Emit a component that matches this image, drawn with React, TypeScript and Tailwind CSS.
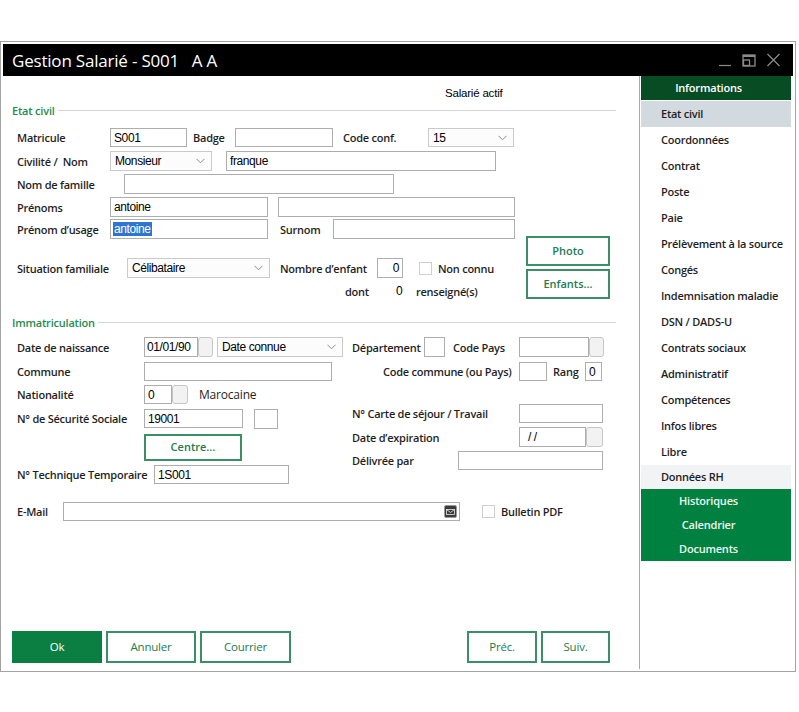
import React from 'react';

const LBL = "shrink-0 text-[11px] tracking-[-0.25px] font-semibold text-[#1f1f1f] whitespace-pre leading-none";
const FIELD_FONT = "font-['Liberation_Sans',sans-serif] text-[12px] tracking-[-0.4px] text-black";

function Box({ className = '', children }: { className?: string; children?: React.ReactNode }) {
  return (
    <div className={`shrink-0 h-full border border-[#adadad] bg-white flex items-center px-[3px] overflow-hidden whitespace-nowrap ${FIELD_FONT} ${className}`}>
      {children}
    </div>
  );
}

function Chevron() {
  return (
    <svg width="9" height="6" viewBox="0 0 9 6" className="shrink-0">
      <path d="M0.5 0.8 L4.5 4.8 L8.5 0.8" fill="none" stroke="#8a8a8a" strokeWidth="1" />
    </svg>
  );
}

function Select({ className = '', value }: { className?: string; value: string }) {
  return (
    <div className={`shrink-0 h-full border border-[#cacaca] bg-[#fcfcfc] flex items-center justify-between pl-[4px] pr-[6px] ${FIELD_FONT} ${className}`}>
      <span>{value}</span>
      <Chevron />
    </div>
  );
}

function SmallBtn({ className = '' }: { className?: string }) {
  return <div className={`shrink-0 h-full border border-[#c6c6c6] rounded-[3px] bg-[#f2f2f2] ${className}`} />;
}

function Check({ className = '' }: { className?: string }) {
  return <div className={`shrink-0 w-[13px] h-[13px] border border-[#cfcfcf] bg-white ${className}`} />;
}

function GreenBtn({ className = '', children }: { className?: string; children: React.ReactNode }) {
  return (
    <div className={`shrink-0 border-2 border-[#3b8f66] bg-white flex items-center justify-center text-[11px] font-semibold text-[#237c4f] ${className}`}>
      {children}
    </div>
  );
}

function Section({ title, pad }: { title: string; pad: string }) {
  return (
    <div className={`flex items-center h-[14px] pl-[9px] pr-[23px] ${pad}`}>
      <span className="text-[11px] tracking-[-0.2px] font-semibold text-[#1f8c50] leading-none">{title}</span>
      <div className="flex-1 ml-[3px] h-px bg-[#d4d4d4]" />
    </div>
  );
}

const sideItems = [
  'Coordonnées', 'Contrat', 'Poste', 'Paie', 'Prélèvement à la source', 'Congés',
  'Indemnisation maladie', 'DSN / DADS-U', 'Contrats sociaux', 'Administratif',
  'Compétences', 'Infos libres', 'Libre',
];

const SIDE = "ml-[1px] w-[150px] pl-[20px] flex items-center text-[11px] tracking-[-0.25px] font-semibold text-[#1f1f1f] whitespace-nowrap";

export default function App() {
  return (
    <div className="w-[799px] h-[712px] bg-white overflow-hidden font-['Open_Sans',sans-serif]">
      <div className="mt-[41px] w-[796px] h-[631px] border border-[#a3a3a3] p-[2px] flex flex-col">
        {/* title bar */}
        <div className="h-[32px] bg-black flex items-center pl-[9px] pr-[12px]">
          <span className="text-white text-[17px] leading-none whitespace-pre tracking-[-0.2px]">Gestion Salarié - S001   A A</span>
          <div className="ml-auto flex items-center gap-[10px]">
            <svg width="14" height="14" viewBox="0 0 14 14">
              <path d="M1 12.5 H13" stroke="#8c8c8c" strokeWidth="1.2" />
            </svg>
            <svg width="14" height="13" viewBox="0 0 14 13">
              <rect x="1" y="1" width="12" height="11" fill="none" stroke="#8c8c8c" strokeWidth="1.3" />
              <path d="M1 2 H13" stroke="#8c8c8c" strokeWidth="2" />
              <rect x="1.5" y="6" width="6" height="5.5" fill="none" stroke="#8c8c8c" strokeWidth="1.3" />
            </svg>
            <svg width="15" height="14" viewBox="0 0 15 14">
              <path d="M1.5 1 L13.5 13 M13.5 1 L1.5 13" stroke="#8c8c8c" strokeWidth="1.2" />
            </svg>
          </div>
        </div>

        {/* body */}
        <div className="flex-1 flex">
          <div className="w-[637px] border-r border-[#a9a9a9] flex flex-col">
            <div className="mt-[10px] h-[16px] pl-[442px] flex items-center font-['Liberation_Sans',sans-serif] text-[11.5px] tracking-[-0.2px] text-black">
              Salarié actif
            </div>
            <Section title="Etat civil" pad="mt-[1px]" />

            <div className="mt-[11px] h-[19px] pl-[14px] flex items-center">
              <span className={`${LBL} w-[93px]`}>Matricule</span>
              <Box className="w-[77px]">S001</Box>
              <span className={`${LBL} ml-[6px] w-[42px]`}>Badge</span>
              <Box className="w-[98px]" />
              <span className={`${LBL} ml-[10px] w-[85px]`}>Code conf.</span>
              <Select className="w-[86px]" value="15" />
            </div>

            <div className="mt-[4px] h-[20px] pl-[14px] flex items-center">
              <span className={`${LBL} w-[93px]`}>Civilité /  Nom</span>
              <Select className="w-[102px]" value="Monsieur" />
              <Box className="ml-[14px] w-[270px]">franque</Box>
            </div>

            <div className="mt-[3px] h-[20px] pl-[14px] flex items-center">
              <span className={`${LBL} w-[107px]`}>Nom de famille</span>
              <Box className="w-[270px]" />
            </div>

            <div className="mt-[3px] h-[20px] pl-[14px] flex items-center">
              <span className={`${LBL} w-[93px]`}>Prénoms</span>
              <Box className="w-[158px]">antoine</Box>
              <Box className="ml-[10px] w-[237px]" />
            </div>

            <div className="mt-[2px] h-[20px] pl-[14px] flex items-center">
              <span className={`${LBL} w-[93px]`}>Prénom d’usage</span>
              <Box className="w-[158px] !px-[2px]">
                <span className="bg-[#2f74d0] text-white px-px leading-[14px]">antoine</span>
              </Box>
              <span className={`${LBL} ml-[12px] w-[53px]`}>Surnom</span>
              <Box className="w-[182px]" />
            </div>

            {/* situation familiale + photo */}
            <div className="mt-[-3px] pl-[14px] flex">
              <div className="w-[509px] pt-[22px] flex flex-col">
                <div className="h-[20px] flex items-center">
                  <span className={`${LBL} w-[110px]`}>Situation familiale</span>
                  <Select className="w-[143px]" value="Célibataire" />
                  <span className={`${LBL} ml-[10px] w-[97px]`}>Nombre d’enfant</span>
                  <Box className="w-[26px] justify-end">0</Box>
                  <Check className="ml-[16px]" />
                  <span className={`${LBL} ml-[6px]`}>Non connu</span>
                </div>
                <div className="mt-[6px] h-[14px] flex items-center">
                  <span className={`${LBL} ml-[328px] w-[51px]`}>dont</span>
                  <span className={`w-[20px] ${FIELD_FONT}`}>0</span>
                  <span className={LBL}>renseigné(s)</span>
                </div>
              </div>
              <div className="flex flex-col">
                <GreenBtn className="w-[84px] h-[30px]">Photo</GreenBtn>
                <GreenBtn className="mt-[3px] w-[84px] h-[30px]">Enfants...</GreenBtn>
              </div>
            </div>

            <Section title="Immatriculation" pad="mt-[16px]" />

            <div className="mt-[8px] h-[20px] pl-[14px] flex items-center">
              <span className={`${LBL} w-[127px]`}>Date de naissance</span>
              <Box className="w-[54px] !px-[2px]">01/01/90</Box>
              <SmallBtn className="w-[15px]" />
              <Select className="ml-[4px] w-[126px]" value="Date connue" />
              <span className={`${LBL} ml-[9px] w-[72px]`}>Département</span>
              <Box className="w-[21px]" />
              <span className={`${LBL} ml-[8px] w-[66px]`}>Code Pays</span>
              <Box className="w-[70px]" />
              <SmallBtn className="w-[15px]" />
            </div>

            <div className="mt-[5px] h-[19px] pl-[14px] flex items-center">
              <span className={`${LBL} w-[127px]`}>Commune</span>
              <Box className="w-[188px]" />
              <span className={`${LBL} ml-[51px] w-[136px]`}>Code commune (ou Pays)</span>
              <Box className="w-[28px]" />
              <span className={`${LBL} ml-[6px] w-[32px]`}>Rang</span>
              <Box className="w-[17px]">0</Box>
            </div>

            <div className="mt-[4px] h-[19px] pl-[14px] flex items-center">
              <span className={`${LBL} w-[127px]`}>Nationalité</span>
              <Box className="w-[28px]">0</Box>
              <SmallBtn className="w-[16px]" />
              <span className="ml-[11px] text-[12px] tracking-[-0.2px] text-[#1f1f1f] leading-none">Marocaine</span>
            </div>

            <div className="pl-[14px] flex">
              <div className="w-[335px] pt-[5px] flex flex-col">
                <div className="h-[19px] flex items-center">
                  <span className={`${LBL} w-[127px]`}>N° de Sécurité Sociale</span>
                  <Box className="w-[99px]">19001</Box>
                  <Box className="ml-[11px] w-[24px] !h-[20px]" />
                </div>
                <GreenBtn className="mt-[6px] ml-[127px] w-[98px] h-[27px]">Centre...</GreenBtn>
                <div className="mt-[4px] h-[19px] flex items-center">
                  <span className={`${LBL} w-[137px]`}>N° Technique Temporaire</span>
                  <Box className="w-[135px]">1S001</Box>
                </div>
              </div>
              <div className="flex flex-col">
                <div className="h-[19px] flex items-center">
                  <span className={`${LBL} w-[167px]`}>N° Carte de séjour / Travail</span>
                  <Box className="w-[84px]" />
                </div>
                <div className="mt-[4px] h-[20px] flex items-center">
                  <span className={`${LBL} w-[167px]`}>Date d’expiration</span>
                  <Box className="w-[67px] !pl-[8px]">/ /</Box>
                  <SmallBtn className="w-[17px]" />
                </div>
                <div className="mt-[4px] h-[19px] flex items-center">
                  <span className={`${LBL} w-[106px]`}>Délivrée par</span>
                  <Box className="w-[145px]" />
                </div>
              </div>
            </div>

            <div className="mt-[18px] h-[19px] pl-[14px] flex items-center">
              <span className={`${LBL} w-[46px]`}>E-Mail</span>
              <Box className="w-[397px] justify-end !pr-[2px]">
                <div className="w-[13px] h-[13px] rounded-[2px] bg-[#3a3a3a] border border-[#9a9a9a] flex items-center justify-center">
                  <svg width="9" height="6" viewBox="0 0 9 6">
                    <rect x="0.5" y="0.5" width="8" height="5" fill="none" stroke="#e6e6e6" strokeWidth="0.8" />
                    <path d="M0.5 0.5 L4.5 3.5 L8.5 0.5" fill="none" stroke="#e6e6e6" strokeWidth="0.8" />
                  </svg>
                </div>
              </Box>
              <Check className="ml-[22px]" />
              <span className={`${LBL} ml-[6px]`}>Bulletin PDF</span>
            </div>

            <div className="flex-1" />

            <div className="mb-[6px] h-[32px] pl-[9px] flex text-[11.5px] tracking-[-0.2px]">
              <div className="w-[90px] bg-[#0a7f41] text-white flex items-center justify-center">Ok</div>
              <GreenBtn className="ml-[4px] w-[90px] !font-normal !text-[11.5px]">Annuler</GreenBtn>
              <GreenBtn className="ml-[4px] w-[91px] !font-normal !text-[11.5px]">Courrier</GreenBtn>
              <GreenBtn className="ml-[176px] w-[70px] !font-normal !text-[11.5px]">Préc.</GreenBtn>
              <GreenBtn className="ml-[4px] w-[69px] !font-normal !text-[11.5px]">Suiv.</GreenBtn>
            </div>
          </div>

          {/* side menu */}
          <div className="flex-1 flex flex-col">
            <div className="ml-[1px] w-[150px] h-[24px] bg-[#074c23] text-white text-[11px] tracking-[-0.2px] font-semibold flex items-center justify-center pr-[15px]">
              Informations
            </div>
            <div className={`${SIDE} mt-[1px] h-[26px] bg-[#d2dadf]`}>Etat civil</div>
            {sideItems.map((s) => (
              <div key={s} className={`${SIDE} h-[26px]`}>{s}</div>
            ))}
            <div className={`${SIDE} h-[24px] bg-[#f1f3f4]`}>Données RH</div>
            <div className="ml-[1px] w-[150px] bg-[#00813f] flex flex-col text-[11px] tracking-[-0.2px] font-semibold text-[#eef7f1]">
              {['Historiques', 'Calendrier', 'Documents'].map((s) => (
                <div key={s} className="h-[24px] flex items-center justify-center pr-[15px]">{s}</div>
              ))}
            </div>
          </div>
        </div>
      </div>
    </div>
  );
}
